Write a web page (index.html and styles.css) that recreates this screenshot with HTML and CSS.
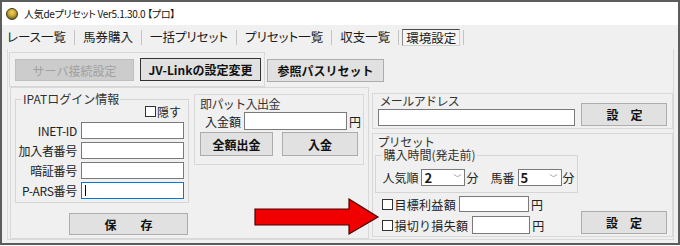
FILE: index.html
```html
<!DOCTYPE html>
<html lang="ja">
<head>
<meta charset="utf-8">
<title>人気deプリセット</title>
<link rel="stylesheet" href="styles.css">
</head>
<body>
<div class="window">
  <div class="titlebar">
    <span class="app-icon"></span>
    <span class="title-text">人気deプリセット Ver5.1.30.0 【プロ】</span>
  </div>
  <div class="menubar">
    <span class="menu-item menu-first">レース一覧</span>
    <span class="menu-sep"></span>
    <span class="menu-item">馬券購入</span>
    <span class="menu-sep"></span>
    <span class="menu-item">一括プリセット</span>
    <span class="menu-sep"></span>
    <span class="menu-item">プリセット一覧</span>
    <span class="menu-sep"></span>
    <span class="menu-item">収支一覧</span>
    <span class="menu-sep"></span>
    <span class="menu-item menu-active">環境設定</span>
    <span class="menu-sep"></span>
  </div>
  <div class="client">
    <div class="toprow">
      <div class="btnpanel">
        <span class="btn btn-disabled btn-server">サーバ接続設定</span>
        <span class="btn btn-default btn-jv">JV-Linkの設定変更</span>
      </div>
      <span class="btn btn-path">参照パスリセット</span>
    </div>
    <div class="mainrow">
      <div class="leftpanel">
        <div class="group ipat">
          <span class="group-title">IPATログイン情報</span>
          <div class="hide-row"><span class="check"></span>隠す</div>
          <div class="field-row"><span class="label">INET-ID</span><span class="input"></span></div>
          <div class="field-row"><span class="label">加入者番号</span><span class="input"></span></div>
          <div class="field-row"><span class="label">暗証番号</span><span class="input"></span></div>
          <div class="field-row"><span class="label">P-ARS番号</span><span class="input input-focus"><span class="caret"></span></span></div>
        </div>
        <div class="panel soku">
          <div class="panel-title">即パット入出金</div>
          <div class="deposit-row"><span class="label-plain">入金額</span><span class="input input-deposit"></span><span class="yen">円</span></div>
          <div class="deposit-btns">
            <span class="btn btn-all">全額出金</span>
            <span class="btn btn-in">入金</span>
          </div>
        </div>
        <span class="btn btn-save">保　　存</span>
      </div>
      <div class="rightcol">
        <div class="panel mail">
          <div class="mail-left">
            <div class="panel-title">メールアドレス</div>
            <span class="input input-mail"></span>
          </div>
          <span class="btn btn-set">設　定</span>
        </div>
        <div class="panel preset">
          <div class="panel-title">プリセット</div>
          <div class="group timegroup">
            <span class="group-title">購入時間(発走前)</span>
            <div class="time-row">
              <span class="label-plain">人気順</span>
              <span class="combo"><span class="combo-val">2</span><span class="chev">﹀</span></span>
              <span class="unit">分</span>
              <span class="label-plain umaban">馬番</span>
              <span class="combo"><span class="combo-val">5</span><span class="chev">﹀</span></span>
              <span class="unit">分</span>
            </div>
          </div>
          <div class="preset-bottom">
            <div class="preset-rows">
              <div class="chk-row"><span class="check"></span><span class="chk-label">目標利益額</span><span class="input input-target"></span><span class="yen">円</span></div>
              <div class="chk-row row2"><span class="check"></span><span class="chk-label">損切り損失額</span><span class="input input-loss"></span><span class="yen">円</span></div>
            </div>
            <span class="btn btn-set btn-set2">設　定</span>
          </div>
        </div>
      </div>
    </div>
  </div>
  <svg class="arrow" width="126" height="38" viewBox="0 0 126 38">
    <polygon points="1,11 95,11 95,1 124,19 95,36 95,27 1,27" fill="#f00000" stroke="#4a0000" stroke-width="1.2" stroke-linejoin="miter"/>
  </svg>
</div>
</body>
</html>
```

FILE: styles.css
```css
* { box-sizing: border-box; }
html, body { margin: 0; padding: 0; background: #ffffff; }
body {
  font-family: "Noto Sans CJK JP", "Noto Sans", sans-serif;
  font-size: 12px;
  color: #1a1a1a;
}
.window {
  position: relative;
  width: 680px;
  height: 245px;
  border: 2px solid #5c5c5c;
  background: #f0f0f0;
  overflow: hidden;
}
.titlebar {
  height: 23px;
  background: #ffffff;
  display: flex;
  align-items: center;
  padding-left: 4px;
}
.app-icon {
  width: 12px;
  height: 12px;
  border-radius: 50%;
  background: radial-gradient(circle at 50% 35%, #f2d35a 0, #c9a230 45%, #6f6a2a 75%);
  border: 1px solid #3e3a1c;
  margin-right: 6px;
}
.title-text {
  font-size: 10px;
  letter-spacing: -0.3px;
  font-feature-settings: "palt";
  color: #111;
  white-space: pre;
}
.menubar {
  height: 24px;
  display: flex;
  align-items: center;
  padding-left: 0;
}
.menu-item {
  padding: 0 8px;
  font-size: 12.5px;
  line-height: 16px;
  font-feature-settings: "palt";
  color: #1a1a1a;
  height: 17px;
}
.menu-first { padding-left: 5px; }
.menu-active {
  border: 1px solid #8a8a8a;
  border-top-color: #4a4a4a;
  border-right-color: #d0d0d0;
  border-bottom-color: #d0d0d0;
  padding: 0 3px;
  margin: 0 3px;
  background: #f5f5f5;
}
.menu-sep {
  width: 1px;
  height: 15px;
  background: #c4c4c4;
}
.client {
  margin-left: 5px;
  width: 667px;
  height: 191px;
  border: 1px solid #dadada;
  border-top: none;
}
.toprow {
  display: flex;
  align-items: flex-start;
  padding-top: 3px;
}
.btnpanel {
  margin-left: 1px;
  width: 256px;
  height: 35px;
  border: 1px solid #d8d8d8;
  display: flex;
  align-items: flex-start;
  padding: 6px 0 0 5px;
}
.btn {
  display: flex;
  align-items: center;
  justify-content: center;
  background: #e1e1e1;
  border: 1px solid #adadad;
  font-weight: bold;
  font-size: 12px;
  color: #111;
  font-family: "Noto Sans CJK JP", sans-serif;
}
.btn-disabled {
  background: #cccccc;
  border-color: #bfbfbf;
  color: #a0a0a0;
  font-weight: normal;
}
.btn-server { width: 119px; height: 22px; }
.btn-default {
  border: 1px solid #333;
  box-shadow: inset 0 0 0 1px #e1e1e1;
}
.btn-jv { width: 121px; height: 23px; margin-left: 6px; margin-top: -1px; }
.btn-path { width: 117px; height: 23px; margin-left: 2px; margin-top: 7px; }
.mainrow {
  display: flex;
  align-items: flex-start;
}
.leftpanel {
  margin-left: 2px;
  width: 360px;
  height: 152px;
  border: 1px solid #d8d8d8;
  display: grid;
  grid-template-columns: 174px 170px;
  column-gap: 5px;
  align-items: start;
  padding-left: 4px;
}
.group {
  position: relative;
  border: 1px solid #d5d5d5;
}
.group-title {
  position: absolute;
  top: -7px;
  left: 6px;
  background: #f0f0f0;
  padding: 0 1px;
  font-size: 12px;
  line-height: 12px;
  color: #333;
}
.ipat {
  margin-top: 11px;
  width: 174px;
  height: 104px;
  padding: 4px 0 0 0;
}
.hide-row {
  display: flex;
  align-items: center;
  justify-content: flex-end;
  padding-right: 7px;
  height: 15px;
  font-size: 12px;
  color: #222;
}
.check {
  display: inline-block;
  width: 11px;
  height: 11px;
  border: 1px solid #333;
  background: #fff;
  margin-right: 1px;
}
.field-row {
  display: flex;
  align-items: center;
  margin-top: 3px;
  height: 17px;
}
.field-row:first-of-type { margin-top: 1px; }
.label {
  width: 61px;
  text-align: right;
  font-size: 12px;
  color: #222;
  white-space: nowrap;
  letter-spacing: -0.3px;
}
.input {
  display: block;
  background: #fff;
  border: 1px solid #7a7a7a;
}
.field-row .input { width: 103px; height: 17px; margin-left: 4px; }
.input-focus { border-color: #0078d7; position: relative; }
.caret {
  position: absolute;
  left: 3px;
  top: 2px;
  width: 1px;
  height: 11px;
  background: #000;
}
.panel {
  border: 1px solid #d8d8d8;
}
.panel-title {
  font-size: 12px;
  line-height: 13px;
  color: #333;
  letter-spacing: -0.6px;
}
.soku {
  margin-top: 6px;
  width: 170px;
  height: 71px;
  padding: 2px 0 0 5px;
}
.deposit-row {
  display: flex;
  align-items: center;
  height: 18px;
  margin-top: 2px;
  padding-left: 5px;
}
.label-plain { font-size: 12px; color: #222; white-space: nowrap; }
.input-deposit { width: 103px; height: 18px; margin-left: 3px; }
.yen { font-size: 12px; margin-left: 2px; color: #222; }
.deposit-btns {
  display: flex;
  margin-top: 2px;
}
.btn-all { width: 73px; height: 24px; }
.btn-in { width: 76px; height: 24px; margin-left: 9px; }
.btn-save {
  grid-column: 1;
  width: 119px;
  height: 22px;
  margin-left: 54px;
  margin-top: 7px;
  font-size: 12px;
}
.rightcol {
  margin-left: 3px;
  width: 301px;
}
.mail {
  margin-top: 6px;
  height: 36px;
  display: flex;
  align-items: flex-end;
  padding: 0 0 2px 5px;
}
.mail-left { display: flex; flex-direction: column; }
.mail .panel-title { margin-left: 1px; margin-bottom: 2px; }
.input-mail { width: 197px; height: 17px; }
.btn-set { width: 86px; height: 23px; margin-left: 6px; }
.preset {
  margin-top: 4px;
  height: 104px;
  padding: 1px 0 0 0;
}
.preset > .panel-title { margin-left: 4px; }
.timegroup {
  margin-top: 7px;
  margin-left: 2px;
  width: 203px;
  height: 38px;
}
.time-row {
  display: flex;
  align-items: center;
  margin-top: 13px;
  margin-left: 6px;
  height: 17px;
}
.combo {
  position: relative;
  display: flex;
  align-items: center;
  width: 44px;
  height: 17px;
  margin-left: 3px;
  background: #fff;
  border: 1px solid #7a7a7a;
}
.combo-val {
  font-weight: bold;
  font-size: 13px;
  margin-left: 2px;
  line-height: 15px;
}
.chev {
  position: absolute;
  right: 3px;
  top: 0;
  font-size: 8px;
  line-height: 15px;
  color: #777;
}
.unit { font-size: 12px; margin-left: 1px; color: #222; }
.umaban { margin-left: 12px; }
.preset-bottom {
  display: flex;
  align-items: flex-end;
  margin-top: 3px;
}
.preset-rows {
  margin-left: 9px;
  display: flex;
  flex-direction: column;
}
.chk-row {
  display: flex;
  align-items: center;
  height: 16px;
}
.chk-row.row2 { margin-top: 4px; height: 18px; }
.chk-label { font-size: 12px; color: #222; white-space: nowrap; letter-spacing: 0.3px; }
.input-target { width: 70px; height: 16px; margin-left: 3px; }
.input-loss { width: 58px; height: 18px; margin-left: 4px; }
.btn-set2 { margin-left: auto; margin-right: 5px; margin-bottom: 0; }
.arrow {
  position: absolute;
  left: 252px;
  top: 196px;
}
```
